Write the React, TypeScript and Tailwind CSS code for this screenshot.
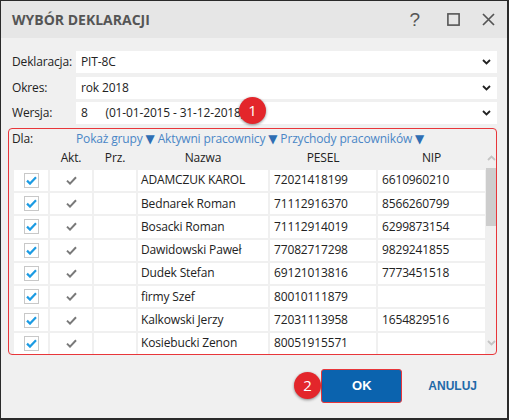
const rows = [
  { name: 'ADAMCZUK KAROL', pesel: '72021418199', nip: '6610960210' },
  { name: 'Bednarek Roman', pesel: '71112916370', nip: '8566260799' },
  { name: 'Bosacki Roman', pesel: '71112914019', nip: '6299873154' },
  { name: 'Dawidowski Paweł', pesel: '77082717298', nip: '9829241855' },
  { name: 'Dudek Stefan', pesel: '69121013816', nip: '7773451518' },
  { name: 'firmy Szef', pesel: '80010111879', nip: '' },
  { name: 'Kalkowski Jerzy', pesel: '72031113958', nip: '1654829516' },
  { name: 'Kosiebucki Zenon', pesel: '80051915571', nip: '' },
];

const fields = [
  { label: 'Deklaracja:', value: 'PIT-8C' },
  { label: 'Okres:', value: 'rok 2018' },
  { label: 'Wersja:', value: '8\u00a0\u00a0\u00a0\u00a0\u00a0\u00a0(01-01-2015 - 31-12-2018)' },
];

const cols = 'grid grid-cols-[34px_42px_42px_130px_106px_107px] gap-x-[2px]';

function Chevron({ className }: { className?: string }) {
  return (
    <svg width="9" height="6" viewBox="0 0 9 6" className={className}>
      <path d="M1 1l3.5 3.5L8 1" fill="none" stroke="currentColor" strokeWidth="1.8" />
    </svg>
  );
}

function Tri() {
  return <span className="text-[#2f6eb3] text-[12px] font-['DejaVu_Sans',sans-serif]">▼</span>;
}

function Badge({ n, className }: { n: string; className: string }) {
  return (
    <div
      className={`absolute w-[27px] h-[27px] rounded-full bg-[#e3262b] text-white text-[15px] flex items-center justify-center shadow-[0_1px_3px_rgba(0,0,0,0.45)] ${className}`}
    >
      {n}
    </div>
  );
}

export default function App() {
  return (
    <div className="relative w-[509px] h-[420px] bg-[#f0f0f0] border-l border-t border-r-2 border-b-2 border-[#2a2a2a] flex flex-col text-[12px] tracking-[-0.15px] text-[#222] font-['Open_Sans',sans-serif]">
      {/* title bar */}
      <div className="h-[37px] bg-[#e6e6e6] flex items-center pl-[11px] pr-[12px]">
        <div className="text-[14px] font-bold text-[#555] tracking-normal">WYBÓR DEKLARACJI</div>
        <div className="ml-auto flex items-center text-[#555]">
          <span className="text-[19px] font-['Liberation_Sans',sans-serif] leading-none mr-[27px]">?</span>
          <svg width="13" height="13" viewBox="0 0 13 13" className="mr-[22px]">
            <rect x="0.9" y="0.9" width="11.2" height="11.2" fill="none" stroke="currentColor" strokeWidth="1.6" />
          </svg>
          <svg width="13" height="13" viewBox="0 0 13 13">
            <path d="M1 1l11 11M12 1L1 12" stroke="currentColor" strokeWidth="1.7" />
          </svg>
        </div>
      </div>

      {/* body */}
      <div className="flex-1 flex flex-col pl-[7px] pr-[10px]">
        <div className="mt-[13px] flex flex-col gap-[3.5px] pl-[4px]">
          {fields.map((f) => (
            <div key={f.label} className="flex items-center h-[22px]">
              <div className="w-[64px] shrink-0">{f.label}</div>
              <div className="flex-1 h-full bg-white flex items-center pl-[5px] pr-[6px]">
                <span className="whitespace-pre">{f.value}</span>
                <Chevron className="ml-auto text-[#222]" />
              </div>
            </div>
          ))}
        </div>

        {/* selection area */}
        <div className="mt-[4px] h-[227px] rounded-[4px] border-[1.5px] border-[#e8363a] flex flex-col overflow-hidden">
          <div className="h-[20px] flex items-center pl-[3px]">
            <span className="w-[64px] shrink-0">Dla:</span>
            <span className="text-[#4a86c6] whitespace-nowrap">
              Pokaż grupy <Tri /> Aktywni pracownicy <Tri /> Przychody pracowników <Tri />
            </span>
          </div>
          <div className="flex-1 flex pl-[5px] overflow-hidden">
            <div className="flex flex-col">
              <div className={`${cols} h-[21px] items-center mb-[2px]`}>
                <div />
                <div className="text-center">Akt.</div>
                <div className="text-center">Prz.</div>
                <div className="text-center">Nazwa</div>
                <div className="text-center">PESEL</div>
                <div className="text-center">NIP</div>
              </div>
              <div className="flex flex-col gap-y-[2px]">
                {rows.map((r) => (
                  <div key={r.name} className={`${cols} h-[21.3px]`}>
                    <div className="bg-white flex items-center justify-center">
                      <div className="w-[15px] h-[15px] bg-white border border-[#c8c8c8] flex items-center justify-center">
                        <svg width="11" height="9" viewBox="0 0 11 9">
                          <path d="M1 4.6l3 3L10 1.2" fill="none" stroke="#1c9be3" strokeWidth="2.2" />
                        </svg>
                      </div>
                    </div>
                    <div className="bg-white flex items-center justify-center">
                      <svg width="11" height="9" viewBox="0 0 11 9">
                        <path d="M1 4.6l3 3L10 1.2" fill="none" stroke="#7a7a7a" strokeWidth="2" />
                      </svg>
                    </div>
                    <div className="bg-white" />
                    <div className="bg-white flex items-center pl-[3px] whitespace-nowrap">{r.name}</div>
                    <div className="bg-white flex items-center pl-[4px]">{r.pesel}</div>
                    <div className="bg-white flex items-center pl-[4px]">{r.nip}</div>
                  </div>
                ))}
              </div>
            </div>
            {/* scrollbar */}
            <div className="w-[11px] ml-[1px] flex flex-col items-center">
              <Chevron className="mt-[6px] text-[#c4c4c4] rotate-180" />
              <div className="mt-[7px] w-full h-[58px] bg-[#cdcdcd]" />
              <Chevron className="mt-auto mb-[8px] text-[#c4c4c4]" />
            </div>
          </div>
        </div>

        {/* footer */}
        <div className="flex items-center justify-end mt-[14px] pr-[20px]">
          <button className="w-[81px] h-[34px] rounded-[3px] bg-[#0b63ae] border-[1.5px] border-[#e8363a] text-white text-[13px] font-bold tracking-normal font-['Liberation_Sans',sans-serif]">
            OK
          </button>
          <button className="ml-[26px] text-[#1f6aa8] text-[12px] font-bold tracking-normal font-['Liberation_Sans',sans-serif]">
            ANULUJ
          </button>
        </div>
      </div>

      <Badge n="1" className="left-[238px] top-[96px]" />
      <Badge n="2" className="left-[293px] top-[371px]" />
    </div>
  );
}
